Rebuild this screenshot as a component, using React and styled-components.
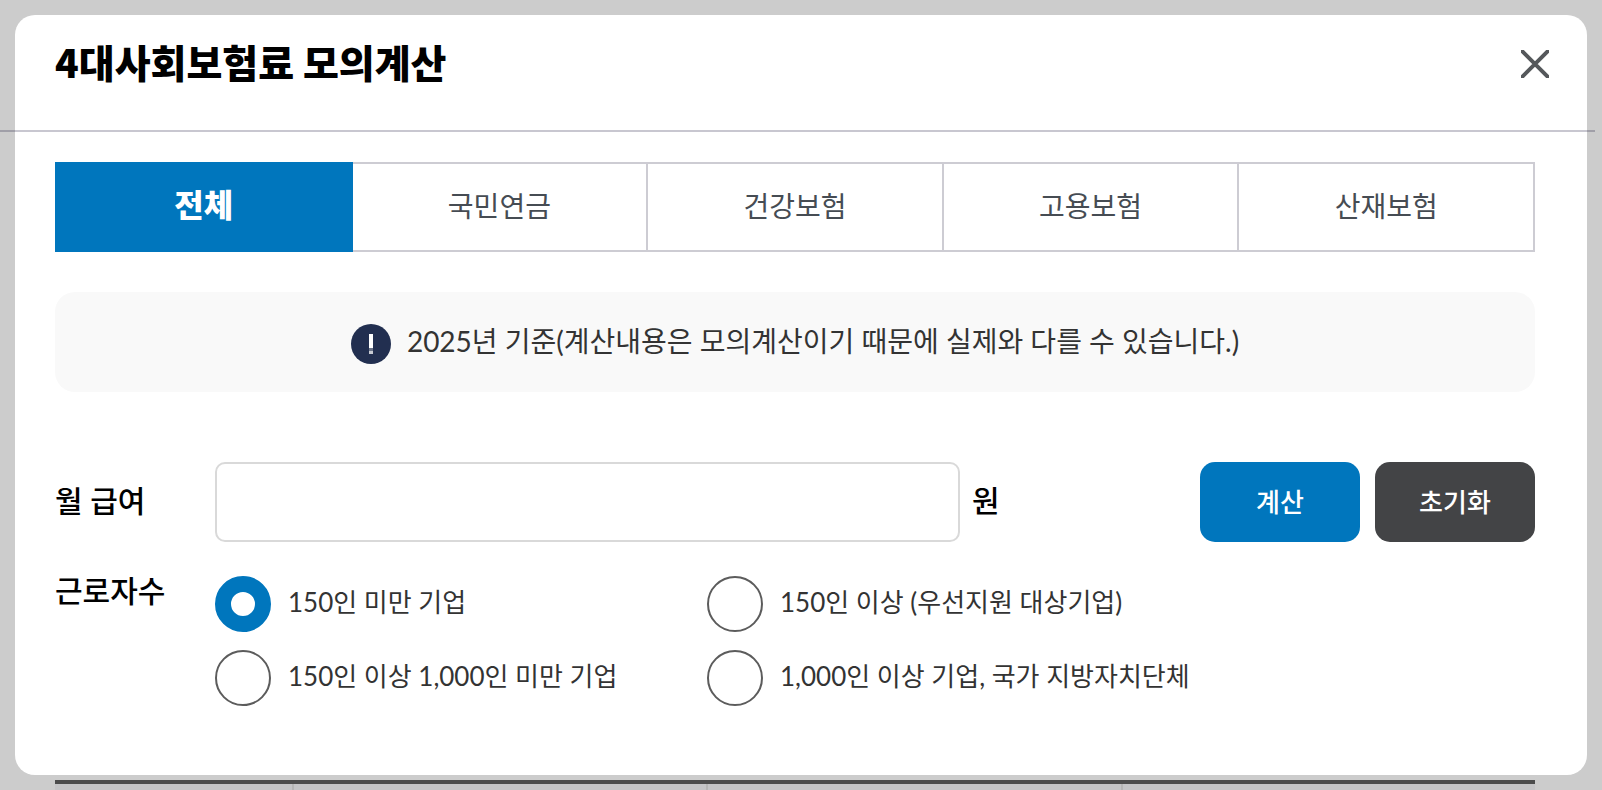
import React, { useState } from 'react';
import styled, { createGlobalStyle } from 'styled-components'

const GlobalStyle = createGlobalStyle`
* {
    box-sizing: border-box;
}
body {
    margin: 0;
    background: #ccc;
    font-family: Lato, "Noto Sans CJK KR", sans-serif;
    color: #000;
}
button, input {
    font-family: inherit;
}
`

const Page = styled.div`
    display: flex;
    flex-direction: column;
    gap: 5px;
    min-height: 100vh;
    padding: 15px 15px 0;
    overflow: hidden;
`

const Modal = styled.main`
    background: #fff;
    border-radius: 20px;
    padding-bottom: 69px;
`

const Header = styled.header`
    display: flex;
    align-items: center;
    justify-content: space-between;
    margin: 0 -8px 0 -15px;
    padding: 21px 46px 38px 55px;
    border-bottom: 2px solid rgba(5, 0, 40, 0.22);
`

const Title = styled.h1`
    margin: 0;
    padding-bottom: 6px;
    font-family: "Noto Sans CJK KR", sans-serif;
    font-size: 39px;
    line-height: 50px;
    font-weight: 900;
`

const CloseButton = styled.button`
    display: flex;
    padding: 0;
    border: 0;
    background: none;
    cursor: pointer;
`

const Content = styled.div`
    padding: 30px 52px 0 40px;
`

const Tabs = styled.div`
    display: flex;
`

const Tab = styled.button`
    flex: 1;
    height: 90px;
    padding: 0 0 ${props => props.$active ? '8px' : '4px'};
    border: 2px solid ${props => props.$active ? '#0076bd' : '#cdccd3'};
    background: ${props => props.$active ? '#0076bd' : '#fff'};
    color: ${props => props.$active ? '#fff' : '#464c53'};
    font-size: ${props => props.$active ? '32px' : '28px'};
    font-weight: ${props => props.$active ? 900 : 400};
    position: relative;
    z-index: ${props => props.$active ? 1 : 0};
    cursor: pointer;
    & + & {
        margin-left: -2px;
    }
`

const Notice = styled.p`
    display: flex;
    align-items: center;
    justify-content: center;
    gap: 16px;
    min-height: 100px;
    margin: 40px 0 70px;
    padding: 4px 0 0;
    border-radius: 20px;
    background: #f9f9f9;
    color: #333;
    font-size: 28px;
    line-height: 40px;
`

const NoticeText = styled.span`
    padding-bottom: 6px;
`

const Row = styled.div`
    display: grid;
    grid-template-columns: 160px 1fr;
    align-items: ${props => props.$top ? 'start' : 'center'};
    margin-top: ${props => props.$top ? '34px' : '0'};
`

const labelText = `
    padding-bottom: 4px;
    font-size: 30px;
    line-height: 28px;
    font-weight: 500;
`

const Label = styled.label`
    ${labelText}
`

const GroupLabel = styled.span`
    ${labelText}
`

const Field = styled.div`
    display: flex;
    align-items: center;
`

const SalaryInput = styled.input`
    flex: 0 1 745px;
    min-width: 0;
    height: 80px;
    padding: 0 20px;
    border: 2px solid #d9d9d9;
    border-radius: 10px;
    background: #fff;
    font-size: 30px;
`

const Unit = styled.span`
    ${labelText}
    margin-left: 12px;
`

const Buttons = styled.div`
    display: flex;
    gap: 15px;
    margin-left: auto;
`

const Button = styled.button`
    width: 160px;
    height: 80px;
    padding: 0 0 4px;
    border: 0;
    border-radius: 15px;
    background: ${props => props.$dark ? '#434446' : '#0076bd'};
    color: #fff;
    font-size: 26px;
    font-weight: 500;
    cursor: pointer;
`

const Options = styled.div`
    display: grid;
    grid-template-columns: 492px 1fr;
    row-gap: 18px;
`

const Option = styled.label`
    display: flex;
    align-items: center;
    gap: 17px;
    color: #333;
    font-size: 26px;
    line-height: 40px;
    cursor: pointer;
`

const OptionText = styled.span`
    padding-bottom: 4px;
`

const Radio = styled.input`
    appearance: none;
    flex: none;
    width: 56px;
    height: 56px;
    margin: 0;
    border: 2px solid #5c5c5c;
    border-radius: 50%;
    background: #fff;
    &:checked {
        border: 16px solid #0076bd;
    }
`

// top edge of the result table that sits under the popup
const ResultTable = styled.div`
    flex: 1;
    display: grid;
    grid-template-columns: 239fr 414fr 415fr 412fr;
    min-height: 10px;
    margin: 0 52px 0 40px;
    border-top: 4px solid #4c4c4c;
    background: #c4c4c6;
`

const ResultCell = styled.div`
    border-right: ${props => props.$last ? '0' : '2px solid #b5b5b5'};
`

const tabs = ['전체', '국민연금', '건강보험', '고용보험', '산재보험']

const companySizes = [
    '150인 미만 기업',
    '150인 이상 (우선지원 대상기업)',
    '150인 이상 1,000인 미만 기업',
    '1,000인 이상 기업, 국가 지방자치단체',
]

const CloseIcon = () => (
    <svg width="28" height="28" viewBox="0 0 28 28" aria-hidden="true">
        <path d="M-2 -2L30 30M30 -2L-2 30" stroke="#55585b" strokeWidth="4" />
    </svg>
)

const NoticeIcon = () => (
    <svg width="40" height="40" viewBox="0 0 40 40" aria-hidden="true">
        <circle cx="20" cy="20" r="20" fill="#222f50" />
        <path d="M18 10h4v14h-4z" fill="#fff" />
        <path d="M18 24h4v3h-4z" fill="#6b7489" />
        <path d="M18 27h4v3h-4z" fill="#c8cbd3" />
    </svg>
)

function App() {
    const [tab, setTab] = useState(0)
    const [size, setSize] = useState(0)
    const [salary, setSalary] = useState('')

    const reset = () => {
        setSalary('')
        setSize(0)
    }

    return (
        <Page>
            <GlobalStyle />
            <Modal>
                <Header>
                    <Title>4대사회보험료 모의계산</Title>
                    <CloseButton type="button" aria-label="닫기"><CloseIcon /></CloseButton>
                </Header>
                <Content>
                    <Tabs role="tablist">
                        {tabs.map((name, i) => (
                            <Tab
                                key={name}
                                type="button"
                                role="tab"
                                aria-selected={tab === i}
                                $active={tab === i}
                                onClick={() => setTab(i)}
                            >
                                {name}
                            </Tab>
                        ))}
                    </Tabs>
                    <Notice>
                        <NoticeIcon />
                        <NoticeText>2025년 기준(계산내용은 모의계산이기 때문에 실제와 다를 수 있습니다.)</NoticeText>
                    </Notice>
                    <Row>
                        <Label htmlFor="salary">월 급여</Label>
                        <Field>
                            <SalaryInput
                                id="salary"
                                type="text"
                                inputMode="numeric"
                                value={salary}
                                onChange={e => setSalary(e.target.value)}
                            />
                            <Unit>원</Unit>
                            <Buttons>
                                <Button type="button">계산</Button>
                                <Button type="button" $dark onClick={reset}>초기화</Button>
                            </Buttons>
                        </Field>
                    </Row>
                    <Row $top>
                        <GroupLabel id="size-label">근로자수</GroupLabel>
                        <Options role="radiogroup" aria-labelledby="size-label">
                            {companySizes.map((text, i) => (
                                <Option key={text} htmlFor={`size-${i}`}>
                                    <Radio
                                        id={`size-${i}`}
                                        type="radio"
                                        name="size"
                                        checked={size === i}
                                        onChange={() => setSize(i)}
                                    />
                                    <OptionText>{text}</OptionText>
                                </Option>
                            ))}
                        </Options>
                    </Row>
                </Content>
            </Modal>
            <ResultTable aria-hidden="true">
                <ResultCell />
                <ResultCell />
                <ResultCell />
                <ResultCell $last />
            </ResultTable>
        </Page>
    );
}

export default App;
